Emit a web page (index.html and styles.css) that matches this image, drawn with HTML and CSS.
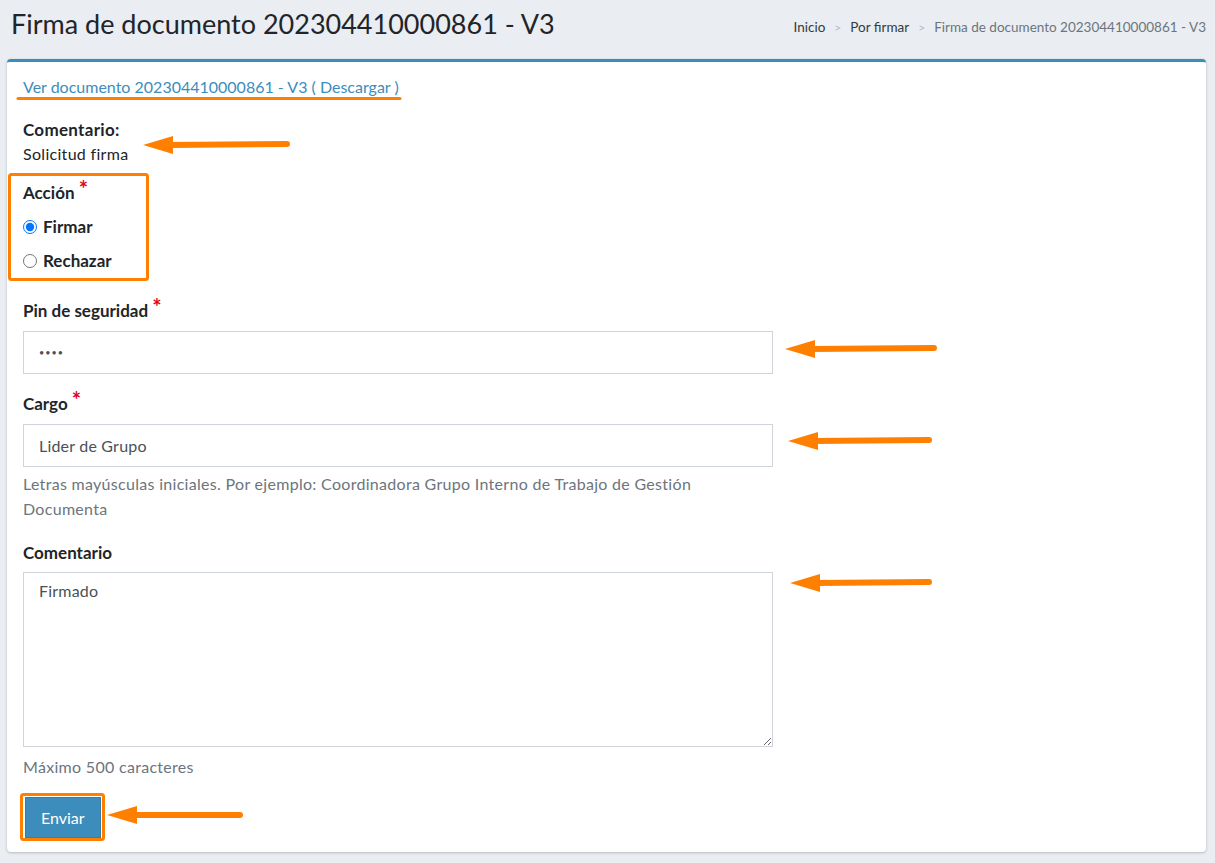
FILE: index.html
```html
<!DOCTYPE html>
<html lang="es">
<head>
  <meta charset="UTF-8" />
  <title>Firma de documento 202304410000861 - V3</title>
  <meta name="viewport" content="width=device-width, initial-scale=1.0" />
  <link rel="stylesheet" href="styles.css">
</head>
<body>

<div class="wrapper">

  <!-- Cabecera -->
  <div class="content-header">
    <h1>Firma de documento 202304410000861 - V3</h1>
    <ol class="breadcrumb">
      <li><a href="#">Inicio</a></li>
      <li><a href="#">Por firmar</a></li>
      <li class="active">Firma de documento 202304410000861 - V3</li>
    </ol>
  </div>

  <!-- Formulario de firma -->
  <div class="card">
    <div class="card-body">
      <p class="doc-link"><a href="#">Ver documento 202304410000861 - V3</a> <a href="#">( Descargar )</a></p>

      <div class="detail">
        <strong>Comentario:</strong>
        <div>Solicitud firma</div>
      </div>

      <div class="group">
        <label class="lbl">Acción <span class="req">*</span></label>
        <label class="radio"><input type="radio" name="accion" checked> Firmar</label>
        <label class="radio"><input type="radio" name="accion"> Rechazar</label>
      </div>

      <div class="group field">
        <label class="lbl" for="pin">Pin de seguridad <span class="req">*</span></label>
        <input type="password" id="pin" class="form-control" value="1234">
      </div>

      <div class="group field">
        <label class="lbl" for="cargo">Cargo <span class="req">*</span></label>
        <input type="text" id="cargo" class="form-control" value="Lider de Grupo">
        <small class="help">Letras mayúsculas iniciales. Por ejemplo: Coordinadora Grupo Interno de Trabajo de Gestión Documenta</small>
      </div>

      <div class="group field">
        <label class="lbl" for="comentario">Comentario</label>
        <textarea id="comentario" class="form-control">Firmado</textarea>
        <small class="help">Máximo 500 caracteres</small>
      </div>

      <button class="btn">Enviar</button>
    </div>
  </div>

  <!-- Marcas naranjas de la captura -->
  <svg class="marks" width="1215" height="863" viewBox="0 0 1215 863">
    <g fill="none" stroke="#ff8000" stroke-width="3" stroke-linecap="round">
      <line x1="18" y1="98.5" x2="400" y2="98.5" />
      <rect x="9.5" y="174.5" width="138" height="105" rx="2" />
      <rect x="21.5" y="794.5" width="82" height="45" rx="2" />
    </g>
    <g stroke="#ff8000" stroke-width="6" stroke-linecap="round">
      <line x1="168" y1="145" x2="287" y2="144" />
      <line x1="810" y1="349" x2="934" y2="348" />
      <line x1="813" y1="441" x2="929" y2="440" />
      <line x1="815" y1="583" x2="929" y2="582" />
      <line x1="133" y1="815" x2="240" y2="815" />
    </g>
    <g fill="#ff8000">
      <polygon points="143,145 173,136 173,154" />
      <polygon points="785,349 815,340 815,358" />
      <polygon points="788,441 818,432 818,450" />
      <polygon points="790,583 820,574 820,592" />
      <polygon points="107,815 137,806 137,824" />
    </g>
  </svg>

</div>

</body>
</html>
```

FILE: styles.css
```css
* {
  margin: 0; padding: 0; box-sizing: border-box;
  font-family: 'Lato', sans-serif;
}

body {
  background-color: #eaedf1;
  color: #212529;
  font-size: 16px;
  line-height: 24px;
}

.wrapper {
  position: relative;
  width: 1215px;
  min-height: 863px;
  padding: 0 9px 0 7px;
}

a { color: #3c8dbc; text-decoration: none; }

.content-header {
  display: flex;
  justify-content: space-between;
  align-items: flex-start;
  padding: 7px 0 0 4px;
  height: 59px;
}

.content-header h1 {
  font-size: 27px;
  font-weight: 400;
  line-height: 34px;
}

.breadcrumb {
  display: flex;
  list-style: none;
  font-size: 13.5px;
  padding-top: 8px;
}

.breadcrumb li + li::before {
  content: ">";
  color: #b7bcc1;
  font-size: 12px;
  padding: 0 9px;
}

.breadcrumb a { color: #343a40; }
.breadcrumb .active { color: #6c757d; }

.card {
  background: white;
  border-top: 3px solid #3c8dbc;
  border-radius: 4px;
  box-shadow: 0 0 1px rgba(0,0,0,0.125), 0 1px 3px rgba(0,0,0,0.2);
}

.card-body {
  padding: 13px 16px 14px;
}

.doc-link { margin-bottom: 19px; }

.detail { margin-bottom: 15px; letter-spacing: 0.3px; }

.detail strong, .lbl, .radio { font-size: 17px; }

.lbl {
  display: block;
  font-weight: 700;
  height: 24px;
}

.req {
  color: #e3001b;
  font-size: 22px;
  font-weight: 700;
  line-height: 0;
  position: relative;
  top: -2px;
}

.radio {
  display: flex;
  align-items: center;
  height: 24px;
  font-weight: 700;
  margin-top: 10px;
}

.radio input {
  width: 14px;
  height: 14px;
  margin: 0 6px 0 0;
}

.field { margin-top: 26px; width: 750px; }
.field + .field { margin-top: 18px; }
.field:last-of-type { margin-top: 20px; }

.form-control {
  display: block;
  width: 750px;
  height: 43px;
  margin-top: 8px;
  padding: 8px 15px;
  border: 1px solid #ced4da;
  border-radius: 0;
  font-size: 16px;
  color: #495057;
  background: white;
  letter-spacing: 0.2px;
}

#pin {
  font-size: 9px;
  letter-spacing: 1px;
}

textarea.form-control {
  height: 175px;
  margin-top: 7px;
  resize: vertical;
}

.help {
  display: block;
  max-width: 690px;
  color: #6c757d;
  font-size: 16px;
  line-height: 25px;
  margin-top: 4px;
  letter-spacing: 0.3px;
}

textarea + .help { margin-top: 8px; line-height: 24px; }

.btn {
  display: block;
  margin: 18px 0 0 2px;
  height: 41px;
  padding: 0 15px;
  background: #3c8dbc;
  color: white;
  border: 1px solid #367fa9;
  font-size: 16px;
  cursor: pointer;
}

.marks {
  position: absolute;
  top: 0; left: 0;
  pointer-events: none;
}
```
